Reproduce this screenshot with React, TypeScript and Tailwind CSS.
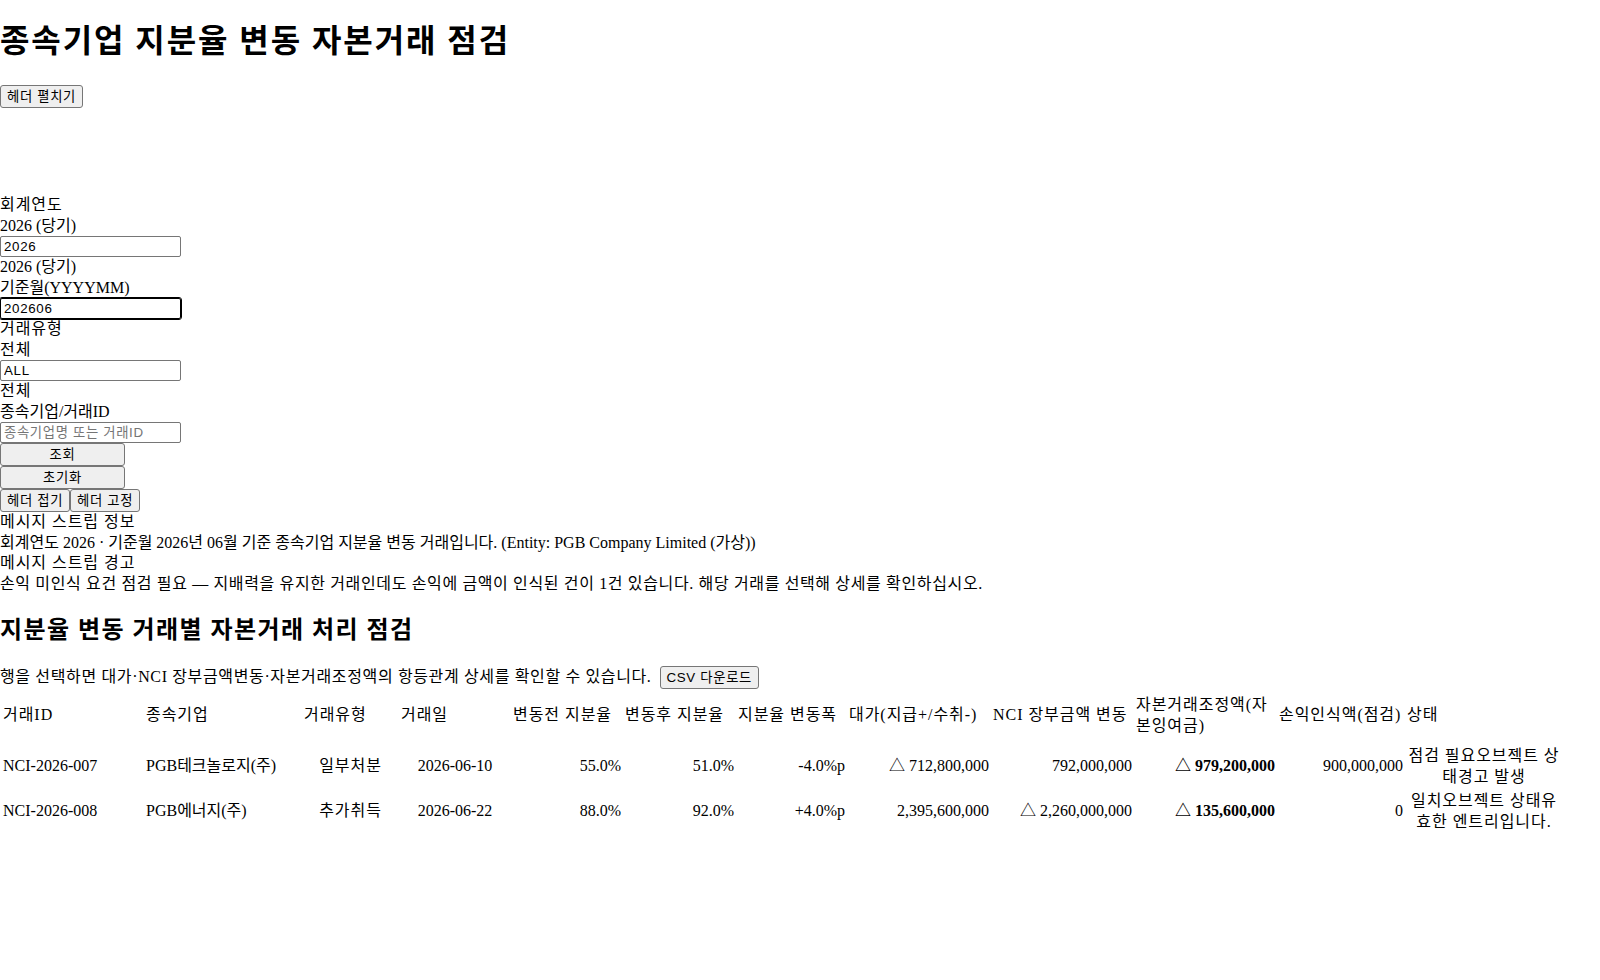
import { useState } from "react";

const serif = "font-['Liberation_Serif','Noto_Sans_CJK_KR',serif]";
const ctrl = "font-['Liberation_Sans','Noto_Sans_CJK_KR',sans-serif] text-[13.33px] tracking-[0.05em]";
const btn = `${ctrl} h-[23px] px-[6px] bg-[#efefef] border border-[#767676] rounded-[3px] text-black leading-[19px]`;
const input = `${ctrl} block w-[181px] h-[21px] px-[3px] border border-[#767676] rounded-[2px] bg-white text-black leading-[17px] placeholder:text-[#757575]`;
const ko = "tracking-[0.06em]";

const columns = [
  { label: "거래ID", w: "w-[141px]" },
  { label: "종속기업", w: "w-[156px]" },
  { label: "거래유형", w: "w-[95px]" },
  { label: "거래일", w: "w-[110px]" },
  { label: "변동전 지분율", w: "w-[110px]" },
  { label: "변동후 지분율", w: "w-[111px]" },
  { label: "지분율 변동폭", w: "w-[109px]" },
  { label: "대가(지급+/수취-)", w: "w-[142px]" },
  { label: "NCI 장부금액 변동", w: "w-[141px]" },
  { label: "자본거래조정액(자본잉여금)", w: "w-[141px]" },
  { label: "손익인식액(점검)", w: "w-[126px]" },
  { label: "상태", w: "w-[156px]" },
];

const rows = [
  {
    id: "NCI-2026-007",
    company: "PGB테크놀로지(주)",
    type: "일부처분",
    date: "2026-06-10",
    before: "55.0%",
    after: "51.0%",
    diff: "-4.0%p",
    consideration: "△ 712,800,000",
    nci: "792,000,000",
    adjustment: "△ 979,200,000",
    pl: "900,000,000",
    status: "점검 필요오브젝트 상태경고 발생",
  },
  {
    id: "NCI-2026-008",
    company: "PGB에너지(주)",
    type: "추가취득",
    date: "2026-06-22",
    before: "88.0%",
    after: "92.0%",
    diff: "+4.0%p",
    consideration: "2,395,600,000",
    nci: "△ 2,260,000,000",
    adjustment: "△ 135,600,000",
    pl: "0",
    status: "일치오브젝트 상태유효한 엔트리입니다.",
  },
];

export default function App() {
  const [year, setYear] = useState("2026");
  const [month, setMonth] = useState("202606");
  const [kind, setKind] = useState("ALL");
  const [keyword, setKeyword] = useState("");

  return (
    <div className={`${serif} text-[16px] leading-[20.5px] text-black bg-white min-h-[980px]`}>
      <h1 className={`${ko} text-[32px] font-bold leading-[40px] my-[21px]`}>종속기업 지분율 변동 자본거래 점검</h1>
      <div className="pt-[3px]">
        <button className={btn}>헤더 펼치기</button>
      </div>

      <div className="mt-[87px]">
        <div className={ko}>회계연도</div>
        <div>2026 (당기)</div>
        <input className={input} value={year} onChange={(e) => setYear(e.target.value)} />
        <div>2026 (당기)</div>
        <div>기준월(YYYYMM)</div>
        <input
          className={`${input} border-black outline-1 outline-black`}
          value={month}
          onChange={(e) => setMonth(e.target.value)}
        />
        <div className={ko}>거래유형</div>
        <div className={ko}>전체</div>
        <input className={input} value={kind} onChange={(e) => setKind(e.target.value)} />
        <div className={ko}>전체</div>
        <div>종속기업/거래ID</div>
        <input
          className={input}
          value={keyword}
          onChange={(e) => setKeyword(e.target.value)}
          placeholder="종속기업명 또는 거래ID"
        />
        <button className={`${btn} block w-[125px]`}>조회</button>
        <button className={`${btn} block w-[125px]`}>초기화</button>
        <div className="flex">
          <button className={btn}>헤더 접기</button>
          <button className={btn}>헤더 고정</button>
        </div>
      </div>

      <div className={ko}>메시지 스트립 정보</div>
      <div>회계연도 2026 · 기준월 2026년 06월 기준 종속기업 지분율 변동 거래입니다. (Entity: PGB Company Limited (가상))</div>
      <div className={ko}>메시지 스트립 경고</div>
      <div className="tracking-[0.04em]">
        손익 미인식 요건 점검 필요 — 지배력을 유지한 거래인데도 손익에 금액이 인식된 건이 1건 있습니다. 해당 거래를 선택해 상세를 확인하십시오.
      </div>

      <h2 className={`${ko} text-[24px] font-bold leading-[32px] mt-[20px] mb-[20px]`}>지분율 변동 거래별 자본거래 처리 점검</h2>
      <div className="flex items-center gap-[8px]">
        <span className="tracking-[0.04em]">행을 선택하면 대가·NCI 장부금액변동·자본거래조정액의 항등관계 상세를 확인할 수 있습니다.</span>
        <button className={btn}>CSV 다운로드</button>
      </div>

      <table className="mt-[3px] table-fixed w-[1564px] border-separate border-spacing-[2px]">
        <thead>
          <tr>
            {columns.map((c) => (
              <th key={c.label} className={`${c.w} ${ko} px-[1px] pt-[1px] pb-[7px] text-left font-normal align-middle`}>
                {c.label}
              </th>
            ))}
          </tr>
        </thead>
        <tbody>
          {rows.map((r) => (
            <tr key={r.id}>
              <td className="p-[1px] text-left">{r.id}</td>
              <td className="p-[1px] text-left">{r.company}</td>
              <td className={`${ko} p-[1px] text-center`}>{r.type}</td>
              <td className="p-[1px] text-center">{r.date}</td>
              <td className="p-[1px] text-right">{r.before}</td>
              <td className="p-[1px] text-right">{r.after}</td>
              <td className="p-[1px] text-right">{r.diff}</td>
              <td className="p-[1px] text-right">{r.consideration}</td>
              <td className="p-[1px] text-right">{r.nci}</td>
              <td className="p-[1px] text-right font-bold">{r.adjustment}</td>
              <td className="p-[1px] text-right">{r.pl}</td>
              <td className={`${ko} p-[1px] text-center`}>{r.status}</td>
            </tr>
          ))}
        </tbody>
      </table>
    </div>
  );
}
